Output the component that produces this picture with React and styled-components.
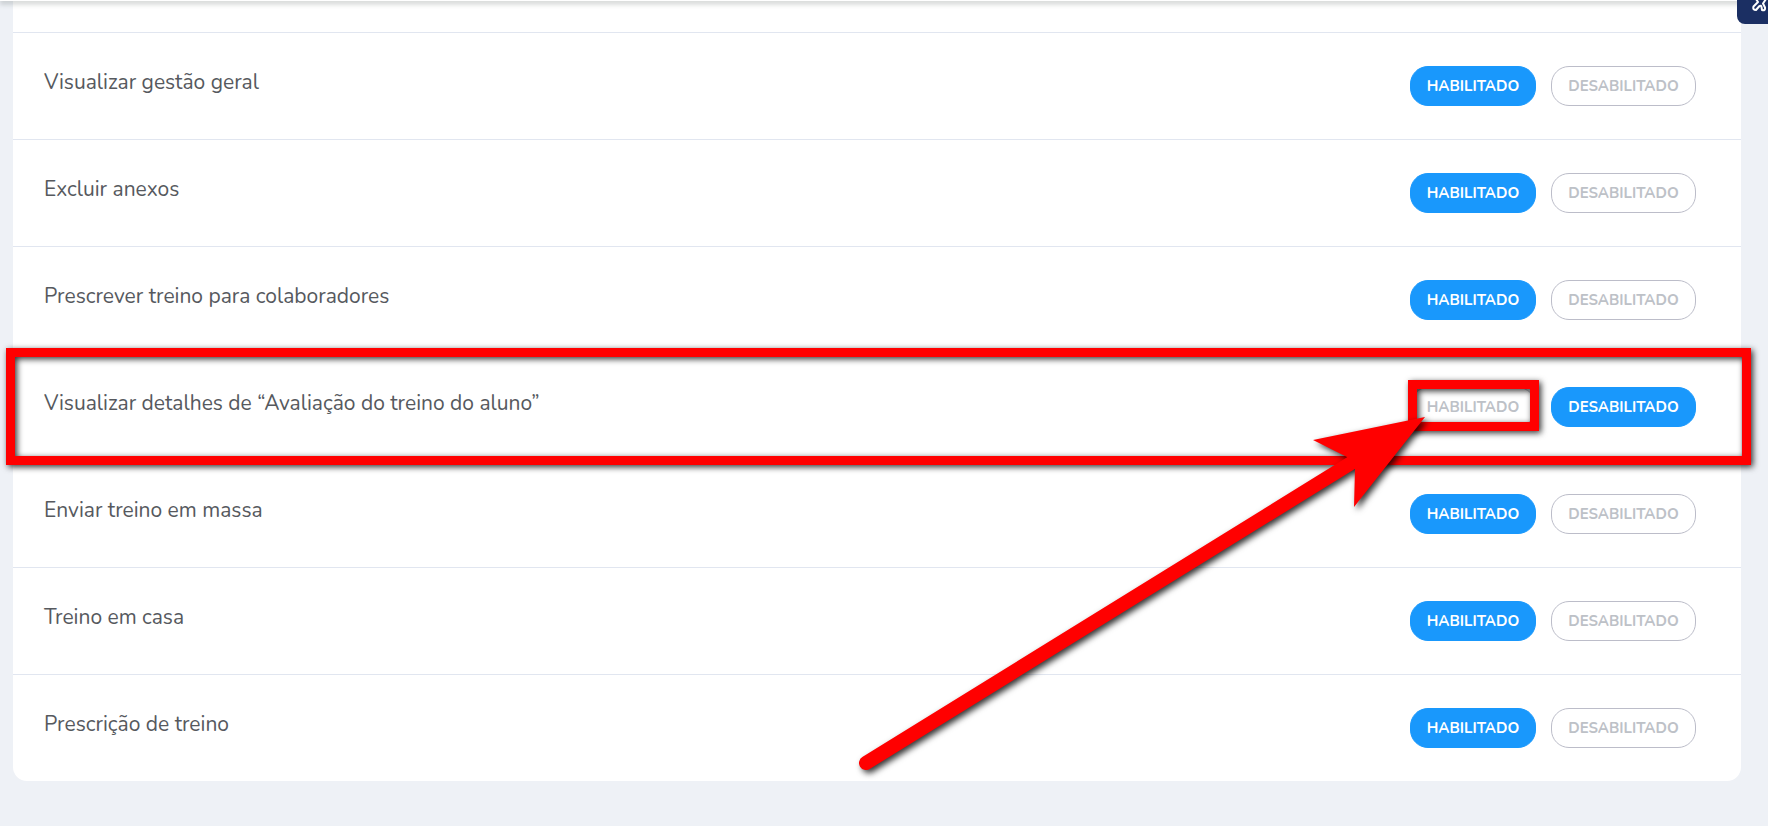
import React, { useState } from "react";
import styled, { createGlobalStyle } from "styled-components";

const permissions = [
  { id: "gestao", label: "Visualizar gestão geral", enabled: true },
  { id: "anexos", label: "Excluir anexos", enabled: true },
  { id: "colaboradores", label: "Prescrever treino para colaboradores", enabled: true },
  {
    id: "avaliacao",
    label: "Visualizar detalhes de “Avaliação do treino do aluno”",
    enabled: false,
    highlighted: true,
  },
  { id: "massa", label: "Enviar treino em massa", enabled: true },
  { id: "casa", label: "Treino em casa", enabled: true },
  { id: "prescricao", label: "Prescrição de treino", enabled: true },
];

function Arrow() {
  return (
    <ArrowSvg width="590" height="380" viewBox="0 0 590 380" aria-hidden="true">
      <line x1="16" y1="353" x2="506" y2="50" stroke="#ff0000" strokeWidth="14" strokeLinecap="round" />
      <path d="M575 7 L463 30 L497 47 L505 59 L504 97 Z" fill="#ff0000" />
    </ArrowSvg>
  );
}

function PermissionRow({ label, initial, highlighted }) {
  const [enabled, setEnabled] = useState(initial);

  return (
    <Row>
      <Label>{label}</Label>
      <Actions role="group" aria-label={label}>
        <ButtonSlot>
          <Toggle type="button" $active={enabled} aria-pressed={enabled} onClick={() => setEnabled(true)}>
            HABILITADO
          </Toggle>
          {highlighted && <ButtonFrame />}
          {highlighted && <Arrow />}
        </ButtonSlot>
        <Toggle type="button" $wide $active={!enabled} aria-pressed={!enabled} onClick={() => setEnabled(false)}>
          DESABILITADO
        </Toggle>
      </Actions>
      {highlighted && <RowFrame />}
    </Row>
  );
}

export default function App() {
  return (
    <>
      <GlobalStyle />
      <Header />
      <SideButton type="button" aria-label="Atalhos">
        <svg width="17" height="14" viewBox="0 0 17 14" fill="none" stroke="#ffffff" strokeWidth="2" strokeLinejoin="round">
          <path d="M5 -1 L7 2 L2.5 6.5 Q1.5 10 5 10 L8.5 6 Q10 5 10.5 7 L11 10 Q14.5 11 14 7.5 L12 3.5 L15 -1" />
        </svg>
      </SideButton>
      <Page>
        <Card>
          <PreviousRow />
          {permissions.map((item) => (
            <PermissionRow
              key={item.id}
              label={item.label}
              initial={item.enabled}
              highlighted={item.highlighted}
            />
          ))}
        </Card>
      </Page>
    </>
  );
}

const GlobalStyle = createGlobalStyle`
  * {
    box-sizing: border-box;
  }

  body {
    margin: 0;
    background: #eef1f6;
    font-family: "Nunito", "Lato", sans-serif;
  }
`;

/* the bar is scrolled away, only its lower edge and shadow show */
const Header = styled.header`
  position: fixed;
  top: -59px;
  left: 0;
  right: 0;
  z-index: 5;
  height: 60px;
  background: #ffffff;
  box-shadow: 0 4px 4px rgba(60, 70, 65, 0.18);
`;

const SideButton = styled.button`
  position: fixed;
  top: 0;
  right: 0;
  z-index: 6;
  display: flex;
  width: 31px;
  height: 24px;
  padding: 0 0 0 14px;
  border: 0;
  border-radius: 0 0 0 8px;
  background: #1b2f63;
  overflow: hidden;
`;

const Page = styled.main`
  padding: 0 27px 45px 13px;
`;

const Card = styled.section`
  border-radius: 0 0 14px 14px;
  background: #ffffff;
`;

const PreviousRow = styled.div`
  height: 33px;
  border-bottom: 1px solid #e1e6f0;
`;

const Row = styled.div`
  position: relative;
  display: flex;
  justify-content: space-between;
  align-items: flex-start;
  padding: 33px 45px 33px 31px;
  border-bottom: 1px solid #e1e6f0;

  &:last-child {
    border-bottom: 0;
  }
`;

const Label = styled.span`
  color: #56595e;
  font-size: 21px;
  font-weight: 400;
  line-height: 32px;
`;

const Actions = styled.div`
  display: flex;
  gap: 15px;
`;

const ButtonSlot = styled.div`
  position: relative;
`;

const Toggle = styled.button`
  width: ${({ $wide }) => ($wide ? "145px" : "126px")};
  height: 40px;
  padding: 0;
  border: 1px solid ${({ $active }) => ($active ? "#1998fc" : "#bcbdc9")};
  border-radius: 18px;
  background: ${({ $active }) => ($active ? "#1998fc" : "#ffffff")};
  color: ${({ $active }) => ($active ? "#ffffff" : "#bdc1c7")};
  font-family: inherit;
  font-size: 15px;
  font-weight: 700;
  cursor: pointer;
`;

const Frame = styled.div`
  position: absolute;
  border: 9px solid #ff0000;
  pointer-events: none;
  filter: drop-shadow(2px 2px 3px rgba(0, 0, 0, 0.8));
`;

const RowFrame = styled(Frame)`
  inset: -6px -10px -5px -7px;
  z-index: 1;
`;

const ButtonFrame = styled(Frame)`
  inset: -7px -3px -4px -2px;
  z-index: 2;
`;

const ArrowSvg = styled.svg`
  position: absolute;
  top: 23px;
  left: -560px;
  z-index: 3;
  pointer-events: none;
  filter: drop-shadow(3px 3px 3px rgba(0, 0, 0, 0.8));
`;
